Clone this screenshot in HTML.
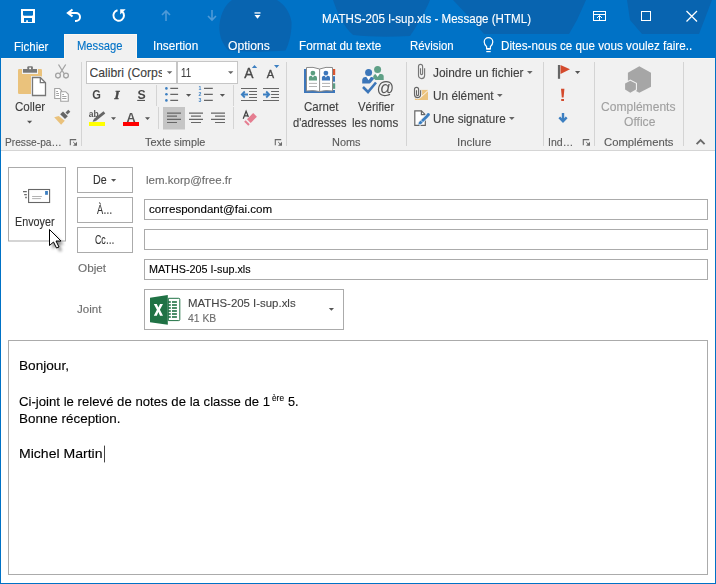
<!DOCTYPE html>
<html><head><meta charset="utf-8"><style>
html,body{margin:0;padding:0;width:716px;height:584px;overflow:hidden;background:#fff;}
body{position:relative;font-family:"Liberation Sans",sans-serif;}
.t{position:absolute;white-space:nowrap;-webkit-text-stroke:0.12px currentColor;line-height:1.117em;transform-origin:0 0;}
#tb{position:absolute;left:0;top:0;width:716px;height:58px;background:#0072C6;}
#msg{position:absolute;left:64px;top:34px;width:73px;height:25px;background:#F1F1F1;box-sizing:border-box;border:1px solid #FDF8F0;border-bottom:none;}
#rib{position:absolute;left:0;top:58px;width:716px;height:92px;box-sizing:border-box;background:#F1F1F1;border-top:1px solid #FDF8F0;}
#rb{position:absolute;left:0;top:150px;width:716px;height:1px;background:#D5D5D5;}
#bl{position:absolute;left:0;top:34px;width:1px;height:550px;background:#0072C6;}
#br{position:absolute;left:715px;top:34px;width:1px;height:550px;background:#0072C6;}
#bb{position:absolute;left:0;top:583px;width:716px;height:1px;background:#0072C6;}
svg{position:absolute;left:0;top:0;}
</style></head><body>
<div id="tb"></div>
<div id="rib"></div><div id="rb"></div>
<svg width="716" height="584" viewBox="0 0 716 584">
<!-- title blobs -->
<g fill="#0864B0">
<path d="M232,0 H277 C284,4 290,12 291.5,22 C292,32 289,44 285.5,50.5 C270,52 244,52 228.5,50.5 C222,44 218.5,34 219.5,24 C221,12 226,4 232,0 Z"/>
<path d="M333,0 H430 C426,10 418,24 410,36 C390,37 370,37 353,35 C343,26 337,12 333,0 Z"/>
<path d="M453,0 H586 L577,20 L569,34 H484 L470,18 Z"/>
<path d="M627,0 H712 L699,34 H642 L630,20 Z"/>
</g>
<rect x="499" y="34" width="217" height="24" fill="#0072C6"/>
<!-- QAT save -->
<path fill-rule="evenodd" fill="#FFF" d="M21,9 H35 V23 H21 Z M23,11 V15 L23.8,15.8 H32.2 L33,15 V11 Z M24,18 V22 H26.2 V20.2 H27.9 V22 H32 V18 Z"/>
<!-- undo -->
<path d="M72.5,9.5 L68,13 L72.5,16.5" fill="none" stroke="#FFF" stroke-width="2.2"/>
<path d="M68.5,13 H76 A4,4 0 0 1 76,21 H75" fill="none" stroke="#FFF" stroke-width="2"/>
<!-- redo -->
<path d="M117.5,10.3 A5.3,5.3 0 1 0 122.2,11.5" fill="none" stroke="#FFF" stroke-width="2"/>
<path d="M120.2,9.3 H125.7 L120.2,14.6 Z" fill="#FFF"/>
<!-- up/down disabled -->
<g stroke="#4E9AD8" stroke-width="1.6" fill="none">
<path d="M166,11 V21 M162,15 L166,11 L170,15"/>
<path d="M212,10 V20 M208,16 L212,20 L216,16"/>
</g>
<!-- customize -->
<rect x="254.5" y="12.3" width="6" height="1.3" fill="#FFF"/>
<path d="M254.5,15 H260.5 L257.5,18.7 Z" fill="#FFF"/>
<!-- window buttons -->
<g fill="none" stroke="#FFF" stroke-width="1">
<rect x="593.5" y="11.5" width="12" height="9"/>
<path d="M593.5,14.5 H605.5"/>
<path d="M599.5,20.5 V15.5 M597,18 L599.5,15.5 L602,18"/>
<rect x="641.5" y="11.5" width="9" height="9"/>
<path d="M686.5,11 L697,21.5 M697,11 L686.5,21.5" stroke-width="1.25"/>
</g>
<!-- ribbon separators -->
<g fill="#D4D4D4">
<rect x="81" y="62" width="1" height="84"/>
<rect x="286" y="62" width="1" height="84"/>
<rect x="406" y="62" width="1" height="84"/>
<rect x="543" y="62" width="1" height="84"/>
<rect x="594" y="62" width="1" height="84"/>
<rect x="683" y="62" width="1" height="84"/>
<rect x="156" y="85" width="1" height="21"/>
<rect x="158" y="107" width="1" height="22"/>
<rect x="233" y="85" width="1" height="21"/>
<rect x="233" y="107" width="1" height="22"/>
</g>
<!-- paste icon -->
<rect x="18" y="69" width="24" height="25" rx="1.2" fill="#EAC27C"/>
<rect x="22" y="68" width="16" height="6" fill="#F1F1F1"/>
<rect x="23" y="69" width="14" height="3.7" fill="#777"/>
<rect x="27.3" y="66.2" width="5.6" height="3.5" rx="1" fill="#777"/>
<rect x="29.2" y="67.6" width="1.8" height="1.6" fill="#FFF"/>
<path d="M31,76 H41 L47,82 V97 H31 Z" fill="#F1F1F1"/>
<path d="M32.5,77.5 H40.3 L45.5,82.7 V95.5 H32.5 Z" fill="#FFF" stroke="#777" stroke-width="1.3"/>
<path d="M40.3,77.5 V82.7 H45.5" fill="none" stroke="#777" stroke-width="1.3"/>
<path d="M27,120.8 H32.2 L29.6,123.4 Z" fill="#555"/>
<!-- scissors -->
<g fill="none" stroke="#A3A3A3" stroke-width="1.3">
<path d="M58.5,64.5 L64,73.5 M65.7,64.5 L60,73.5"/>
<circle cx="58" cy="75.6" r="2.4"/>
<circle cx="66" cy="75.6" r="2.4"/>
</g>
<!-- copy -->
<g fill="#FFF" stroke="#A3A3A3" stroke-width="1.1">
<path d="M54.7,88.5 H59.5 L61.5,90.5 V98.5 H54.7 Z"/>
<path d="M60.7,91.7 H65.7 L68.3,94.3 V101.3 H60.7 Z"/>
</g>
<g stroke="#A3A3A3" stroke-width="1.1">
<path d="M56.2,91.5 H58 M56.2,93.5 H59 M56.2,95.5 H59"/>
<path d="M62.2,94.5 H64 M62.2,96.5 H66.5 M62.2,98.5 H66.5"/>
</g>
<!-- format painter -->
<path d="M54.2,117.2 L58.7,115.9 L64.8,120.8 L61.1,124.8 Z" fill="#EAC27C"/>
<path d="M60.2,114.3 L63,111.5 L67.8,116.3 L65,119.1 Z" fill="#666"/>
<path d="M65.5,112.5 L68.3,109.7 L70.3,111.7 L67.5,114.5 Z" fill="#666"/>
<!-- font boxes -->
<rect x="86.5" y="61.5" width="90" height="22" fill="#FFF" stroke="#C6C6C6"/>
<rect x="177.5" y="61.5" width="60" height="22" fill="#FFF" stroke="#C6C6C6"/>
<path d="M166.9,71.2 H172.3 L169.6,74.1 Z" fill="#666"/>
<path d="M228,71.2 H233.4 L230.7,74.1 Z" fill="#666"/>
<!-- grow/shrink -->
<path d="M251.9,67.9 L254.5,64.9 L257.2,67.9 Z" fill="#3C7FC1"/>
<path d="M274,64.9 L279.3,64.9 L276.6,67.9 Z" fill="#3C7FC1"/>

<!-- lightbulb -->
<path d="M486.6,48.6 V46.6 C485.2,45.2 484.2,43.8 484.2,41.9 A4.3,4.3 0 0 1 492.8,41.9 C492.8,43.8 491.8,45.2 490.4,46.6 V48.6 Z" fill="none" stroke="#FFF" stroke-width="1.2"/>
<rect x="486.3" y="48" width="4.4" height="1.7" fill="#FFF"/>
<rect x="486.3" y="51" width="4.4" height="1.2" fill="#FFF"/>
<!-- G I S -->
<text x="92.3" y="98.8" font-family="Liberation Sans" font-weight="bold" font-size="12.3" fill="#444" style="opacity:0.98" transform="translate(92.3,0) scale(0.9,1) translate(-92.3,0)">G</text>
<text x="114.6" y="98.8" font-family="Liberation Serif" font-weight="bold" font-style="italic" font-size="12.8" fill="#444" stroke="#444" stroke-width="0.5" style="opacity:0.98">I</text>
<text x="137.6" y="98.8" font-family="Liberation Sans" font-weight="bold" font-size="12.3" fill="#444" style="opacity:0.98">S</text>
<rect x="137.2" y="99.9" width="7.8" height="1" fill="#444"/>
<!-- grow shrink A -->
<text x="244.2" y="78.1" font-family="Liberation Sans" font-size="13.8" fill="#444" stroke="#444" stroke-width="0.35" style="opacity:0.98">A</text>
<text x="266.8" y="78.1" font-family="Liberation Sans" font-size="11" fill="#444" stroke="#444" stroke-width="0.35" style="opacity:0.98">A</text>
<!-- ab highlight -->
<text x="88.8" y="116.9" font-family="Liberation Sans" font-weight="bold" font-size="8.5" fill="#555" style="opacity:0.98">ab</text>
<text x="126.6" y="122" font-family="Liberation Sans" font-weight="bold" font-size="12.6" fill="#555" style="opacity:0.98">A</text>


<!-- bullets -->
<g fill="#3C7FC1">
<circle cx="166.4" cy="88.4" r="1.3"/><circle cx="166.4" cy="94.3" r="1.3"/><circle cx="166.4" cy="100.4" r="1.3"/>
</g>
<g stroke="#666" stroke-width="1.3">
<path d="M170.3,88.4 H178.1 M170.3,94.3 H178.1 M170.3,100.4 H178.1"/>
<path d="M204,88.4 H212.8 M204,94.3 H212.8 M204,100.4 H212.8"/>
</g>
<path d="M186,94 H191.2 L188.6,96.8 Z" fill="#555"/>
<path d="M219.8,94 H225 L222.4,96.8 Z" fill="#555"/>
<g fill="#3C7FC1" font-family="Liberation Sans" font-size="5.2" font-weight="bold" style="opacity:0.98">
<text x="198.6" y="90.4">1</text><text x="198.6" y="96.4">2</text><text x="198.6" y="102.4">3</text>
</g>
<!-- indent -->
<g stroke="#666" stroke-width="1.2">
<path d="M241,88.5 H257 M249.1,91.5 H257 M249.1,94.5 H257 M249.1,97.5 H257 M241,100.5 H257"/>
<path d="M263,88.5 H279 M271.1,91.5 H279 M271.1,94.5 H279 M271.1,97.5 H279 M263,100.5 H279"/>
</g>
<g fill="none" stroke="#3C7FC1" stroke-width="1.8">
<path d="M242,94.5 H248 M244.8,91.5 L241.8,94.5 L244.8,97.5"/>
<path d="M263,94.5 H269 M266.2,91.5 L269.2,94.5 L266.2,97.5"/>
</g>
<!-- highlight / font color -->
<path d="M95,119.8 L104.4,112.3" stroke="#666" stroke-width="2.8"/><path d="M92.6,121.8 L94.2,118.6 L96.2,120.9 Z" fill="#666"/>
<rect x="89" y="122" width="16" height="4" fill="#FFFF00"/>
<rect x="123" y="122" width="16" height="4" fill="#FF0000"/>
<path d="M111,117.2 H116 L113.5,120 Z" fill="#555"/>
<path d="M145,117.2 H150 L147.5,120 Z" fill="#555"/>
<!-- align -->
<rect x="163" y="107" width="22" height="22.5" fill="#C5C5C5"/>
<g stroke="#666" stroke-width="1.2">
<path d="M167,113.1 H181 M167,116.2 H177 M167,119.4 H181 M167,122.5 H177"/>
<path d="M189,113.1 H203 M191,116.2 H201 M189,119.4 H203 M191,122.5 H201"/>
<path d="M211,113.1 H225 M215,116.2 H225 M211,119.4 H225 M215,122.5 H225"/>
</g>
<!-- clear formatting -->
<path d="M243.2,118.8 L246.1,111.2 L249,118.2 M244.4,115.9 H248" fill="none" stroke="#444" stroke-width="1.25"/>
<path d="M247,119.2 L253.2,113 L256.9,116.7 L250.7,122.9 Z" fill="#E57D90" stroke="#F1F1F1" stroke-width="1.2"/>
<path d="M247,119.2 L253.2,113 L256.9,116.7 L250.7,122.9 Z" fill="#E57D90"/>
<path d="M245.6,120.2 L249.7,124.3 L248.3,125.8 L244.2,121.7 Z" fill="#E57D90"/>
<!-- launchers -->
<path d="M70.3,145.3 V139.6 H76.2" fill="none" stroke="#6A6A6A" stroke-width="1.1"/>
<path d="M73.0,145.8 H77.0 V141.8 Z" fill="#6A6A6A"/>
<path d="M73.2,142 L75.6,144.4" stroke="#6A6A6A" stroke-width="1"/>
<path d="M275.3,145.3 V139.6 H281.2" fill="none" stroke="#6A6A6A" stroke-width="1.1"/>
<path d="M278.0,145.8 H282.0 V141.8 Z" fill="#6A6A6A"/>
<path d="M278.2,142 L280.6,144.4" stroke="#6A6A6A" stroke-width="1"/>
<path d="M583.3,145.3 V139.6 H589.2" fill="none" stroke="#6A6A6A" stroke-width="1.1"/>
<path d="M586.0,145.8 H590.0 V141.8 Z" fill="#6A6A6A"/>
<path d="M586.2,142 L588.6,144.4" stroke="#6A6A6A" stroke-width="1"/>
<!-- address book -->
<rect x="304" y="69" width="31" height="24" fill="#3D77BB"/>
<rect x="333" y="69" width="2.2" height="6" fill="#D9542F"/>
<rect x="333" y="83.3" width="2.2" height="5.5" fill="#5C9E80"/>
<rect x="333" y="75" width="2.2" height="1.2" fill="#F1F1F1"/>
<rect x="333" y="81.7" width="2.2" height="1.6" fill="#F1F1F1"/>
<rect x="333" y="88.8" width="2.2" height="1.2" fill="#F1F1F1"/>
<path d="M306.5,67.5 Q313,66.5 319.6,69 Q326,66.5 332.5,67.5 V91 Q326,90 319.6,91.5 Q313,90 306.5,91 Z" fill="#FFF" stroke="#8A8A8A" stroke-width="1"/>
<path d="M319.6,69 V91.5" stroke="#8A8A8A" stroke-width="1"/>
<circle cx="312.9" cy="73.1" r="2.4" fill="#5C9E80"/>
<path d="M308.9,80.5 V77.5 Q309,76 311,75.8 H314.8 Q317,76 317,77.5 V80.5 Z" fill="#5C9E80"/><path d="M311.6,75.8 L312.9,77.6 L314.2,75.8 Z" fill="#FFF"/>
<circle cx="325.9" cy="73.1" r="2.4" fill="#3D77BB"/>
<path d="M321.9,80.5 V77.5 Q322,76 324,75.8 H327.8 Q330,76 330,77.5 V80.5 Z" fill="#3D77BB"/><path d="M324.6,75.8 L325.9,77.6 L327.2,75.8 Z" fill="#FFF"/>
<g stroke="#AAA" stroke-width="0.9"><path d="M309,83.4 H317 M309,86.5 H317 M322,83.4 H330 M322,86.5 H330"/></g>
<!-- verifier -->
<circle cx="377.6" cy="69.4" r="3.5" fill="#5FA086"/>
<path d="M373.3,79.9 V76.5 Q373.5,74 376,74 H381 Q383.7,74 383.7,76.5 V79.9 Z" fill="#5FA086"/>
<circle cx="368.6" cy="72.5" r="3.5" fill="#3C76B9"/>
<path d="M362.2,83.6 V79.7 Q362.5,77.1 365,77.1 H371.5 Q373.9,77.1 373.9,79.7 V83.6 Z" fill="#3C76B9"/>
<path d="M375.6,74 L377.6,77 L379.6,74 Z" fill="#FFF"/>
<path d="M366.4,77.1 L368.6,80.2 L370.8,77.1 Z" fill="#FFF"/>
<path d="M376,80.5 L370,87.5" stroke="#F1F1F1" stroke-width="5"/>
<path d="M363,87 L368,92 L376,82.5" fill="none" stroke="#3C76B9" stroke-width="2.6"/>
<text x="376.4" y="93.6" font-family="Liberation Sans" font-size="17.5" fill="#555" style="opacity:0.98">@</text>
<!-- inclure icons -->
<path d="M420.5,68.2 V73.6 A1,1 0 0 0 422.6,73.6 V66.5 A2.05,2.05 0 0 0 418.5,66.5 V75.5 A3.05,3.05 0 0 0 424.6,75.5 V68.2" fill="none" stroke="#777" stroke-width="1.15"/>
<rect x="414.9" y="89.9" width="13.1" height="10.1" fill="#EBC37E"/>
<path d="M420.5,97.6 L428,90.6" stroke="#FFF" stroke-width="0.9"/>
<path d="M416.5,90.3 V94.5 A1,1 0 0 0 418.6,94.5 V89.4 A2.05,2.05 0 0 0 414.5,89.4 V94.6 A3.05,3.05 0 0 0 420.6,94.6 V90.3" fill="none" stroke="#F1F1F1" stroke-width="3"/>
<path d="M416.5,90.3 V94.5 A1,1 0 0 0 418.6,94.5 V89.4 A2.05,2.05 0 0 0 414.5,89.4 V94.6 A3.05,3.05 0 0 0 420.6,94.6 V90.3" fill="none" stroke="#666" stroke-width="1.15"/>
<path d="M414.8,110.8 H421.4 L425.3,114.7 V125.3 H414.8 Z" fill="#FFF" stroke="#666" stroke-width="1.2"/>
<path d="M421.4,110.8 V114.7 H425.3" fill="none" stroke="#666" stroke-width="1.2"/>
<path d="M418.5,124.5 L428.5,114.5" stroke="#F1F1F1" stroke-width="4.5"/>
<path d="M419.6,123.6 L427.8,115.4" stroke="#3C7FC1" stroke-width="2.8"/>
<circle cx="428.3" cy="114.6" r="1.6" fill="#3C7FC1"/>
<path d="M418.2,124.8 L419.2,121.8 L421.2,123.8 Z" fill="#3C7FC1"/>
<path d="M420.5,120 L423.3,122.8" stroke="#FFF" stroke-width="0.7"/>
<!-- arrows next to inclure -->
<path d="M527,71 H532.6 L529.8,74 Z" fill="#666"/>
<path d="M497,94 H502.6 L499.8,97 Z" fill="#666"/>
<path d="M509,117 H514.6 L511.8,120 Z" fill="#666"/>
<!-- flag -->
<rect x="557.9" y="65" width="2.2" height="13.8" fill="#666"/>
<path d="M560.5,65 L570,69.3 L560.5,74 Z" fill="#D44A2C"/>
<path d="M575,71 H580.2 L577.6,74 Z" fill="#555"/>
<path d="M561,88.8 H564.4 L563.6,97.4 H561.8 Z" fill="#D44A2C"/>
<rect x="561.2" y="99" width="2.8" height="2" fill="#D44A2C"/>
<path d="M563,113 V121" stroke="#3C7FC1" stroke-width="2.4"/>
<path d="M559.3,117.3 L563,121.2 L566.7,117.3" fill="none" stroke="#3C7FC1" stroke-width="2.4"/>
<!-- hexagon -->
<path d="M639.3,66.2 L651,72.8 V86.7 L639.3,92.8 L627.9,86.7 V72.8 Z" fill="#A6A6A6"/>
<path d="M630.3,79.5 L637,83 V90.3 L630.3,94 L623.8,90.3 V83 Z" fill="#F1F1F1"/>
<path d="M630.3,80.8 L635.9,83.6 V89.6 L630.3,92.8 L625.1,89.6 V83.6 Z" fill="#A6A6A6"/>
<!-- collapse chevron -->
<path d="M696.6,144.2 L700.6,140.2 L704.6,144.2" fill="none" stroke="#6A6A6A" stroke-width="1.9"/>
<!-- form boxes -->
<rect x="8.5" y="167.5" width="57" height="73.5" fill="#FFF" stroke="#ABABAB"/>
<rect x="77.5" y="167.5" width="55" height="25" fill="#FFF" stroke="#ABABAB"/>
<rect x="77.5" y="197.5" width="55" height="25" fill="#FFF" stroke="#ABABAB"/>
<rect x="77.5" y="227.5" width="55" height="25" fill="#FFF" stroke="#ABABAB"/>
<path d="M111,179 H116.2 L113.6,181.8 Z" fill="#555"/>
<rect x="144.5" y="199.5" width="563" height="20" fill="#FFF" stroke="#ABABAB"/>
<rect x="144.5" y="229.5" width="563" height="20" fill="#FFF" stroke="#ABABAB"/>
<rect x="144.5" y="259.5" width="563" height="20" fill="#FFF" stroke="#ABABAB"/>
<rect x="144.5" y="289.5" width="199" height="40" fill="#FFF" stroke="#ABABAB"/>
<path d="M328.8,308 H334 L331.4,310.8 Z" fill="#555"/>
<rect x="8.5" y="340.5" width="699" height="234" fill="#FFF" stroke="#ABABAB"/>
<!-- envelope -->
<rect x="28.6" y="189.5" width="21" height="13" fill="#FFF" stroke="#666" stroke-width="1.1"/>
<rect x="45.1" y="191" width="2.8" height="3.8" fill="#3C7FC1"/>
<path d="M32.1,196.5 H41.9 M32.1,198.6 H40.9" stroke="#AAA" stroke-width="0.9"/>
<path d="M23,191.6 H26.8 M24.2,194.6 H26.8 M25.2,197.5 H26.8" stroke="#666" stroke-width="1.4"/>
<!-- excel -->
<path d="M168.3,298.3 H178.8 Q179.8,298.3 179.8,299.3 V319.6 Q179.8,320.6 178.8,320.6 H168.3 Z" fill="#FFF" stroke="#207245" stroke-width="1"/>
<g fill="#207245">
<rect x="168" y="301.2" width="2.8" height="1.6"/><rect x="172" y="301.2" width="4.9" height="1.6"/>
<rect x="168" y="304.2" width="2.8" height="1.6"/><rect x="172" y="304.2" width="4.9" height="1.6"/>
<rect x="168" y="307.2" width="2.8" height="1.6"/><rect x="172" y="307.2" width="4.9" height="1.6"/>
<rect x="168" y="310.2" width="2.8" height="1.6"/><rect x="172" y="310.2" width="4.9" height="1.6"/>
<rect x="168" y="313.2" width="2.8" height="1.6"/><rect x="172" y="313.2" width="4.9" height="1.6"/>
<rect x="168" y="316.2" width="2.8" height="1.6"/><rect x="172" y="316.2" width="4.9" height="1.6"/>
</g>
<path d="M150,297.8 L167.8,294.9 V324.8 L150,322.2 Z" fill="#207245"/>
<path d="M153.8,304 H156.8 L158.4,307.6 L160,304 H163 L159.9,309.8 L163,315.7 H160 L158.4,312 L156.8,315.7 H153.8 L156.9,309.8 Z" fill="#FFF"/>
<!-- text cursor -->
<rect x="104" y="445.6" width="1" height="16.8" fill="#444"/>
<!-- mouse cursor -->
<defs><filter id="sh" x="-50%" y="-50%" width="200%" height="200%"><feGaussianBlur stdDeviation="1.6"/></filter></defs>
<path d="M52.5,233 V249 L56.5,245.5 L59.5,251.5 L62,250.5 L59,244.5 H64 Z" fill="#000" opacity="0.45" filter="url(#sh)"/>
<path d="M49.5,229.5 V245.5 L53.5,242 L56.5,248 L59,247 L56,241 H61 Z" fill="#FFF" stroke="#000" stroke-width="1" stroke-linejoin="miter"/>

</svg>
<div id="msg"></div>
<div id="bl"></div><div id="br"></div><div id="bb"></div>
<span class=t id=t0 style="left:321.90px;top:13.00px;font-size:12.2px;color:#FFFFFF;font-weight:normal;transform:scaleX(0.9505);">MATHS-205 I-sup.xls - Message (HTML)</span>
<span class=t id=t1 style="left:13.70px;top:40.00px;font-size:12.8px;color:#FFFFFF;font-weight:normal;transform:scaleX(0.8957);">Fichier</span>
<span class=t id=t2 style="left:77.20px;top:39.00px;font-size:12.8px;color:#0072C6;font-weight:normal;transform:scaleX(0.8780);">Message</span>
<span class=t id=t3 style="left:152.90px;top:39.00px;font-size:12.8px;color:#FFFFFF;font-weight:normal;transform:scaleX(0.9207);">Insertion</span>
<span class=t id=t4 style="left:227.60px;top:39.00px;font-size:12.8px;color:#FFFFFF;font-weight:normal;transform:scaleX(0.9499);">Options</span>
<span class=t id=t5 style="left:298.90px;top:39.00px;font-size:12.8px;color:#FFFFFF;font-weight:normal;transform:scaleX(0.9172);">Format du texte</span>
<span class=t id=t6 style="left:410.00px;top:39.00px;font-size:12.8px;color:#FFFFFF;font-weight:normal;transform:scaleX(0.8904);">Révision</span>
<span class=t id=t7 style="left:500.70px;top:39.00px;font-size:12.8px;color:#FFFFFF;font-weight:normal;transform:scaleX(0.9112);">Dites-nous ce que vous voulez faire..</span>
<span class=t id=t8 style="left:14.70px;top:101.00px;font-size:12.2px;color:#404040;font-weight:normal;transform:scaleX(0.9484);">Coller</span>
<span class=t id=t9 style="left:4.50px;top:136.00px;font-size:10.8px;color:#5A5A5A;font-weight:normal;transform:scaleX(0.9448);">Presse-pa…</span>
<span class=t id=t10 style="left:89.50px;top:67.00px;font-size:12.2px;color:#404040;font-weight:normal;width:72px;overflow:hidden;display:inline-block;">Calibri (Corps</span>
<span class=t id=t11 style="left:181.00px;top:67.00px;font-size:12.2px;color:#404040;font-weight:normal;transform:scaleX(0.7901);">11</span>
<span class=t id=t12 style="left:145.00px;top:136.00px;font-size:10.8px;color:#5A5A5A;font-weight:normal;transform:scaleX(1.0064);">Texte simple</span>
<span class=t id=t13 style="left:303.50px;top:101.00px;font-size:12.2px;color:#404040;font-weight:normal;transform:scaleX(0.9428);">Carnet</span>
<span class=t id=t14 style="left:293.40px;top:117.00px;font-size:12.2px;color:#404040;font-weight:normal;transform:scaleX(0.9153);">d'adresses</span>
<span class=t id=t15 style="left:358.40px;top:101.00px;font-size:12.2px;color:#404040;font-weight:normal;transform:scaleX(0.9376);">Vérifier</span>
<span class=t id=t16 style="left:352.20px;top:117.00px;font-size:12.2px;color:#404040;font-weight:normal;transform:scaleX(0.9491);">les noms</span>
<span class=t id=t17 style="left:332.30px;top:136.00px;font-size:10.8px;color:#5A5A5A;font-weight:normal;transform:scaleX(1.0105);">Noms</span>
<span class=t id=t18 style="left:433.10px;top:67.00px;font-size:12.2px;color:#404040;font-weight:normal;transform:scaleX(0.9751);">Joindre un fichier</span>
<span class=t id=t19 style="left:433.10px;top:90.00px;font-size:12.2px;color:#404040;font-weight:normal;transform:scaleX(0.9707);">Un élément</span>
<span class=t id=t20 style="left:433.10px;top:113.00px;font-size:12.2px;color:#404040;font-weight:normal;transform:scaleX(0.9580);">Une signature</span>
<span class=t id=t21 style="left:457.40px;top:136.00px;font-size:10.8px;color:#5A5A5A;font-weight:normal;transform:scaleX(1.0610);">Inclure</span>
<span class=t id=t22 style="left:548.40px;top:136.00px;font-size:10.8px;color:#5A5A5A;font-weight:normal;transform:scaleX(0.9763);">Ind…</span>
<span class=t id=t23 style="left:601.30px;top:101.00px;font-size:12px;color:#A0A0A0;font-weight:normal;transform:scaleX(1.0063);">Compléments</span>
<span class=t id=t24 style="left:623.70px;top:116.00px;font-size:12px;color:#A0A0A0;font-weight:normal;transform:scaleX(1.0088);">Office</span>
<span class=t id=t25 style="left:604.40px;top:136.00px;font-size:10.8px;color:#5A5A5A;font-weight:normal;transform:scaleX(1.0434);">Compléments</span>
<span class=t id=t26 style="left:15.40px;top:216.00px;font-size:12px;color:#333333;font-weight:normal;transform:scaleX(0.8971);">Envoyer</span>
<span class=t id=t27 style="left:92.60px;top:174.00px;font-size:12px;color:#333333;font-weight:normal;transform:scaleX(0.8929);">De</span>
<span class=t id=t28 style="left:97.00px;top:204.00px;font-size:12px;color:#333333;font-weight:normal;transform:scaleX(0.7694);">À…</span>
<span class=t id=t29 style="left:94.90px;top:234.00px;font-size:12px;color:#333333;font-weight:normal;transform:scaleX(0.7349);">Cc…</span>
<span class=t id=t30 style="left:145.70px;top:174.00px;font-size:11.4px;color:#6D6D6D;font-weight:normal;transform:scaleX(1.0106);">lem.korp@free.fr</span>
<span class=t id=t31 style="left:148.80px;top:203.00px;font-size:11.4px;color:#000000;font-weight:normal;transform:scaleX(1.0164);">correspondant@fai.com</span>
<span class=t id=t32 style="left:77.60px;top:262.00px;font-size:11.2px;color:#6D6D6D;font-weight:normal;transform:scaleX(1.0505);">Objet</span>
<span class=t id=t33 style="left:148.80px;top:263.00px;font-size:11.4px;color:#000000;font-weight:normal;transform:scaleX(0.9459);">MATHS-205 I-sup.xls</span>
<span class=t id=t34 style="left:77.40px;top:303.00px;font-size:11.2px;color:#6D6D6D;font-weight:normal;transform:scaleX(1.0321);">Joint</span>
<span class=t id=t35 style="left:187.60px;top:297.00px;font-size:11.4px;color:#444444;font-weight:normal;transform:scaleX(1.0018);">MATHS-205 I-sup.xls</span>
<span class=t id=t36 style="left:187.60px;top:312.00px;font-size:11.4px;color:#6D6D6D;font-weight:normal;transform:scaleX(0.9120);">41 KB</span>
<span class=t id=t37 style="left:18.60px;top:359.00px;font-size:12.8px;color:#000000;font-weight:normal;transform:scaleX(1.0645);-webkit-text-stroke:0.12px #000;">Bonjour,</span>
<span class=t id=t38 style="left:18.60px;top:395.00px;font-size:12.8px;color:#000000;font-weight:normal;transform:scaleX(1.0295);-webkit-text-stroke:0.12px #000;">Ci-joint le relevé de notes de la classe de 1</span>
<span class=t id=t39 style="left:272.00px;top:394.00px;font-size:8.5px;color:#000000;font-weight:normal;transform:scaleX(0.9759);-webkit-text-stroke:0.12px #000;">ère</span>
<span class=t id=t40 style="left:287.80px;top:395.00px;font-size:12.8px;color:#000000;font-weight:normal;transform:scaleX(0.9918);-webkit-text-stroke:0.12px #000;">5.</span>
<span class=t id=t41 style="left:18.60px;top:412.00px;font-size:12.8px;color:#000000;font-weight:normal;transform:scaleX(1.0489);-webkit-text-stroke:0.12px #000;">Bonne réception.</span>
<span class=t id=t42 style="left:18.60px;top:447.00px;font-size:12.8px;color:#000000;font-weight:normal;transform:scaleX(1.0973);-webkit-text-stroke:0.12px #000;">Michel Martin</span>
</body></html>
